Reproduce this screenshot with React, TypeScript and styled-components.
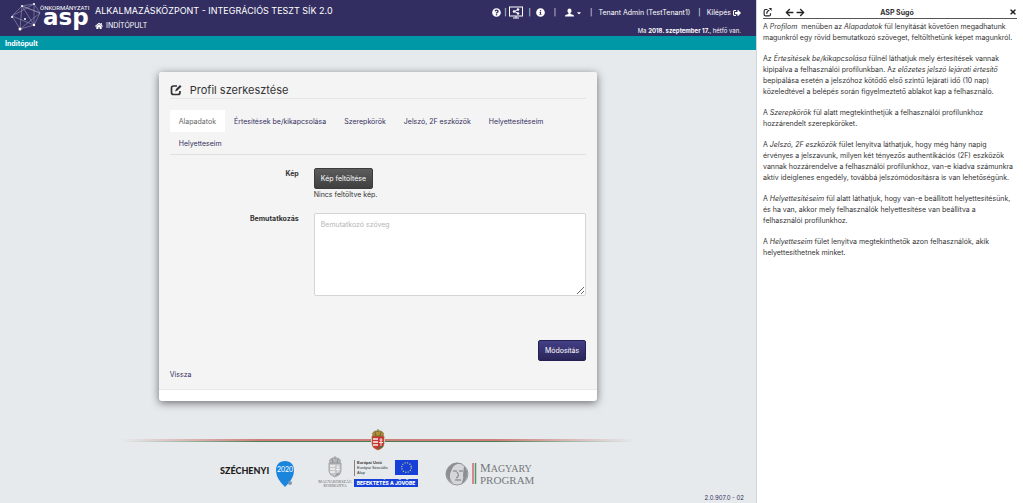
import React from 'react';
import styled, { createGlobalStyle } from 'styled-components';
import { FaHome, FaQuestionCircle, FaInfoCircle, FaSignOutAlt, FaCaretDown, FaArrowLeft, FaArrowRight, FaTimes } from 'react-icons/fa';

const Global = createGlobalStyle`
  * { box-sizing: border-box; }
  body { margin: 0; background: #e6eaed; font: 7px/11px Inter, Roboto, sans-serif; color: #333; }
  a { color: #35305f; text-decoration: none; }
  p { margin: 0; }
  svg { display: block; flex: none; }
`;

const Page = styled.div`
  display: grid;
  grid-template-columns: minmax(0, 1fr) 267px;
  min-height: 100vh;
`;
const Main = styled.div`
  display: flex;
  flex-direction: column;
`;
const Header = styled.header`
  display: flex;
  justify-content: space-between;
  height: 36px;
  padding: 0 15px 0 10px;
  background: #332e61;
  color: #fff;
`;
const Brand = styled.div`
  display: flex;
  gap: 5px;
`;
const BrandText = styled.div`
  padding-top: 4px;
`;
const AppName = styled.div`
  font-size: 9px;
  line-height: 14px;
`;
const HomeLink = styled.a`
  display: flex;
  align-items: center;
  gap: 3px;
  margin-top: 2px;
  && { color: #fff; }
`;
const Tools = styled.div`
  display: flex;
  flex-direction: column;
  align-items: flex-end;
  padding-top: 6px;
`;
const ToolRow = styled.nav`
  display: flex;
  align-items: center;
  height: 14px;
`;
const ToolLink = styled.a`
  display: flex;
  align-items: center;
  gap: 2px;
  && { color: #fff; }
`;
const Divider = styled.span<{ $l: number; $r: number }>`
  margin: 0 ${p => p.$r}px 0 ${p => p.$l}px;
`;
const Today = styled.div`
  margin-top: 6px;
  font-size: 6px;
`;
const Crumb = styled.div`
  height: 14px;
  padding: 2px 5px;
  background: #0097a7;
  color: #fff;
  font-weight: 700;
`;
const Card = styled.main`
  width: 58%;
  margin: 22px auto 0;
  padding-bottom: 11px;
  border-radius: 3px;
  background: #fff;
  box-shadow: 0 2px 8px #0008;
`;
const CardBody = styled.div`
  padding: 11px 11px 9px;
  border-bottom: 1px solid #e8e8e8;
  border-radius: 3px 3px 0 0;
  background: #f4f4f4;
`;
const Title = styled.h1`
  display: flex;
  align-items: center;
  gap: 8px;
  margin: 0;
  padding-bottom: 1px;
  border-bottom: 1px solid #e6e6e6;
  font: 400 11px/14px Inter, Roboto, sans-serif;
`;
const Tabs = styled.nav`
  display: flex;
  flex-wrap: wrap;
  margin-top: 11px;
  border-bottom: 1px solid #e0e0e0;
`;
const Tab = styled.a<{ $active?: boolean }>`
  padding: 6px 9px 5px;
  background: ${p => (p.$active ? '#fff' : 'transparent')};
  && { color: ${p => (p.$active ? '#666' : '#35305f')}; }
`;
const Field = styled.div`
  display: grid;
  grid-template-columns: 129px minmax(0, 1fr);
  column-gap: 15px;
  margin-top: 13px;
`;
const Label = styled.label`
  font-weight: 700;
  text-align: right;
`;
const Button = styled.button<{ $primary?: boolean }>`
  height: 21px;
  padding: 0 6px;
  border: 1px solid ${p => (p.$primary ? '#242052' : '#3c3c3c')};
  border-radius: 2px;
  background: ${p => (p.$primary ? 'linear-gradient(#443f86, #2a2558)' : 'linear-gradient(#5c5c5c, #404040)')};
  color: #fff;
  font: inherit;
`;
const TextArea = styled.textarea`
  display: block;
  width: 100%;
  height: 83px;
  padding: 5px 6px;
  border: 1px solid #d5d5d5;
  border-radius: 2px;
  background: #fff;
  font: inherit;
  &::placeholder { color: #b5b5b5; }
`;
const Actions = styled.div`
  display: flex;
  justify-content: flex-end;
  margin: 44px 0 8px;
`;
const Footer = styled.footer`
  display: flex;
  flex-direction: column;
  align-items: center;
  flex: 1;
  margin-top: 28px;
`;
const Ribbon = styled.div`
  display: grid;
  grid-template-columns: 1fr 14px 1fr;
  align-items: center;
  width: 68%;
`;
const Stripe = styled.div<{ $dir: string }>`
  height: 3px;
  border-bottom: 1px solid #4c7d4c;
  background: #cd7f7c;
  mask-image: linear-gradient(to ${p => p.$dir}, #000 45%, transparent);
`;
const Logos = styled.div`
  display: flex;
  align-items: center;
  gap: 22px;
  margin-top: 5px;
`;
const Version = styled.div`
  align-self: flex-end;
  margin: auto 12px 0 0;
  color: #35305f;
  font-size: 6px;
`;
const Help = styled.aside`
  padding: 6px 6px 0 6px;
  border-left: 1px solid #cfd4d8;
  background: #fff;
`;
const HelpBar = styled.div`
  display: flex;
  align-items: center;
  justify-content: space-between;
  height: 13px;
  margin-bottom: 2px;
  border-bottom: 1px solid #555;
`;
const HelpTools = styled.div`
  display: flex;
  width: 42px;
  justify-content: space-between;
`;
const HelpEnd = styled.div`
  display: flex;
  width: 28px;
  justify-content: flex-end;
`;
const Arrows = styled.div`
  display: flex;
  gap: 2px;
`;
const IconButton = styled.button`
  padding: 0;
  border: 0;
  background: none;
  color: #222;
`;
const HelpText = styled.div`
  display: grid;
  gap: 10px;
`;

const EditIcon = ({ size }: { size: number }) => (
  <svg width={size} height={size} viewBox="0 0 24 24" fill="none" stroke="currentColor" strokeWidth="3.4">
    <path d="M14 4H7Q3 4 3 8v9q0 4 4 4h9q4 0 4-4v-3" />
    <path d="m10 15 2-5 8-8 3 3-8 8z" fill="currentColor" stroke="none" />
  </svg>
);
const ShareIcon = () => (
  <svg width="9" height="9" viewBox="0 0 24 24" fill="none" stroke="currentColor" strokeWidth="3">
    <path d="M12 4H7Q3 4 3 8v9q0 4 4 4h9q4 0 4-4v-3" />
    <path d="M10 15q0-7 7-9" />
    <path d="M15 0h8v8z" fill="currentColor" stroke="none" />
  </svg>
);
const ScreenIcon = () => (
  <svg width="14" height="13" viewBox="0 0 28 26" fill="none" stroke="currentColor" strokeWidth="2">
    <rect x="1" y="2" width="26" height="18" />
    <path d="M8 24h12M14 20v4M18 7l-7 4 7 4" />
    <g fill="currentColor" stroke="none"><circle cx="18" cy="7" r="2.5" /><circle cx="10" cy="11" r="2.5" /><circle cx="18" cy="15" r="2.5" /></g>
  </svg>
);
const UserIcon = () => (
  <svg width="9" height="9" viewBox="0 0 18 18" fill="currentColor">
    <path d="M9 1c3 0 4 2 4 5 0 2-1 3-2 4v2l6 2q1 1 1 3H0q0-2 1-3l6-2v-2C6 9 5 8 5 6c0-3 1-5 4-5z" />
  </svg>
);
const AspLogo = () => (
  <svg width="80" height="36" viewBox="0 0 80 36">
    <g fill="none" stroke="#a9a6c6" strokeWidth=".5">
      <path d="M2 16 12 6l12-2 6 9-6 12-14 4zM12 6l-2 23 20-16zM2 16l22 9L12 6l18 7M2 16l22-12v21" />
    </g>
    <g fill="#fff"><circle cx="2" cy="17" r="1" /><circle cx="12" cy="6" r="1" /><circle cx="24" cy="4" r="1" /><circle cx="24" cy="25" r="1.2" /><circle cx="10" cy="29" r="1.5" /><circle cx="15" cy="19" r="1" /></g>
    <text x="30" y="10" fill="#fff" fontFamily="Roboto, sans-serif" fontSize="6">ÖNKORMÁNYZATI</text>
    <text x="33" y="25" fill="#fff" fontFamily="DejaVu Sans, sans-serif" fontWeight="700" fontSize="23">asp</text>
  </svg>
);
const Crest = ({ gray }: { gray?: boolean }) => (
  <svg width="14" height="22" viewBox="0 0 14 22">
    <path d="M1 7h12v8q0 4-6 6-6-2-6-6z" fill={gray ? '#c4c6c8' : '#c33'} stroke={gray ? '#8d9092' : '#a37b36'} strokeWidth=".7" />
    <path d="M2 10h5M2 13h5M2 16h5" stroke="#f3f3f3" strokeWidth="1.3" />
    <path d="M10 9v8M8.5 11h3M8 13.500h4" stroke="#f3f3f3" strokeWidth=".9" />
    <path d="M8 18q2-2 4-1-1 2-5 3z" fill={gray ? '#999' : '#397943'} />
    <path d="M2 7 1.500 4Q4 1 7 2q3-1 5.500 2L12 7z" fill={gray ? '#b4b6b8' : '#b98b33'} stroke={gray ? '#8d9092' : '#74602f'} strokeWidth=".6" />
    <path d="M7 0v3M4 3l1 4M10 3 9 7" stroke={gray ? '#85888a' : '#396b46'} strokeWidth=".8" />
  </svg>
);
const Szechenyi = () => (
  <svg width="76" height="30" viewBox="0 0 76 30">
    <text x="0" y="16" fontFamily="Lato, sans-serif" fontWeight="900" fontSize="9" fill="#1c1c1c">SZÉCHENYI</text>
    <path d="M65 3c6 0 9 4 9 9 0 7-4 12-9 17-5-5-9-10-9-17 0-5 3-9 9-9z" fill="#1b85dc" />
    <text x="65" y="14" textAnchor="middle" fontFamily="Lato, sans-serif" fontSize="7" fill="#fff">2020</text>
    <circle cx="70" cy="25" r="2" fill="#7f9bb4" />
  </svg>
);
const EuLogo = () => (
  <svg width="101" height="34" viewBox="0 0 101 34">
    <g transform="translate(10 0)"><Crest gray /></g>
    <g fontFamily="Liberation Serif, serif" fontSize="4" fill="#666" textAnchor="middle"><text x="17" y="27">MAGYARORSZÁG</text><text x="17" y="31">KORMÁNYA</text></g>
    <path d="M36.500 4v16" stroke="#555" strokeWidth=".7" />
    <g fontFamily="Liberation Sans, sans-serif" fontSize="4" fill="#333"><text x="39" y="8" fontWeight="700">Európai Unió</text><text x="39" y="13">Európai Szociális</text><text x="39" y="18">Alap</text></g>
    <rect x="77" y="4" width="23" height="15" fill="#1740d8" />
    <circle cx="88.500" cy="11.500" r="4.800" fill="none" stroke="#d8d76c" strokeWidth="1.200" strokeDasharray="1.100 1.413" />
    <rect x="36" y="23" width="64" height="8" fill="#1740d8" />
    <text x="68" y="29" textAnchor="middle" fontFamily="Inter, sans-serif" fontWeight="800" fontSize="5" fill="#fff">BEFEKTETÉS A JÖVŐBE</text>
  </svg>
);
const Magyary = () => (
  <svg width="96" height="30" viewBox="0 0 96 30">
    <circle cx="16" cy="16" r="11" fill="#d4d6d8" stroke="#85888a" strokeWidth=".8" />
    <path d="M7 10q6-8 15-4-9-1-11 5l-2 5q-1 6 4 10-8-4-8-11zM23 8q4 4 3 10-1 5-6 8 3-5 2-9z" fill="#8c8f91" />
    <path d="M12 13h4M18 13h4M16 14q2 2 1 5l-2 1M14 22h6" fill="none" stroke="#777" />
    <path d="M32 5v21" stroke="#d2696c" strokeWidth="1.500" /><path d="M34.500 5v21" stroke="#52966d" strokeWidth="1.500" />
    <g fontFamily="Liberation Serif, serif" fill="#76797c"><text x="39" y="14" fontSize="12">M<tspan fontSize="10">AGYARY</tspan></text><text x="39" y="26" fontSize="11">PROGRAM</text></g>
  </svg>
);

export default function App() {
  return (
    <>
      <Global />
      <Page>
        <Main>
          <Header>
            <Brand>
              <AspLogo />
              <BrandText>
                <AppName>ALKALMAZÁSKÖZPONT - INTEGRÁCIÓS TESZT SÍK 2.0</AppName>
                <HomeLink href="#"><FaHome size={8} />INDÍTÓPULT</HomeLink>
              </BrandText>
            </Brand>
            <Tools>
              <ToolRow>
                <ToolLink href="#" aria-label="Súgó"><FaQuestionCircle size={9} /></ToolLink>
                <Divider $l={3} $r={3}>|</Divider>
                <ToolLink href="#" aria-label="Megosztás"><ScreenIcon /></ToolLink>
                <Divider $l={5} $r={5}>|</Divider>
                <ToolLink href="#" aria-label="Információ"><FaInfoCircle size={9} /></ToolLink>
                <Divider $l={9} $r={9}>|</Divider>
                <ToolLink href="#" aria-label="Profil"><UserIcon /><FaCaretDown size={6} /></ToolLink>
                <Divider $l={8} $r={6}>|</Divider>
                <span>Tenant Admin (TestTenant1)</span>
                <Divider $l={8} $r={6}>|</Divider>
                <ToolLink href="#">Kilépés <FaSignOutAlt size={8} /></ToolLink>
              </ToolRow>
              <Today>Ma <b>2018. szeptember 17.</b>, hétfő van.</Today>
            </Tools>
          </Header>
          <Crumb>Indítópult</Crumb>
          <Card>
            <CardBody>
              <Title><EditIcon size={12} />Profil szerkesztése</Title>
              <Tabs>
                <Tab href="#" $active>Alapadatok</Tab>
                <Tab href="#">Értesítések be/kikapcsolása</Tab>
                <Tab href="#">Szerepkörök</Tab>
                <Tab href="#">Jelszó, 2F eszközök</Tab>
                <Tab href="#">Helyettesítéseim</Tab>
                <Tab href="#">Helyetteseim</Tab>
              </Tabs>
              <Field>
                <Label htmlFor="picture">Kép</Label>
                <div>
                  <Button id="picture" type="button">Kép feltöltése</Button>
                  <p>Nincs feltöltve kép.</p>
                </div>
              </Field>
              <Field>
                <Label htmlFor="intro">Bemutatkozás</Label>
                <TextArea id="intro" placeholder="Bemutatkozó szöveg" />
              </Field>
              <Actions><Button type="submit" $primary>Módosítás</Button></Actions>
              <a href="#">Vissza</a>
            </CardBody>
          </Card>
          <Footer>
            <Ribbon><Stripe $dir="left" /><Crest /><Stripe $dir="right" /></Ribbon>
            <Logos><Szechenyi /><EuLogo /><Magyary /></Logos>
            <Version>2.0.907.0 - 02</Version>
          </Footer>
        </Main>
        <Help>
          <HelpBar>
            <HelpTools>
              <IconButton aria-label="Megnyitás"><ShareIcon /></IconButton>
              <Arrows>
                <IconButton aria-label="Vissza"><FaArrowLeft size={9} /></IconButton>
                <IconButton aria-label="Előre"><FaArrowRight size={9} /></IconButton>
              </Arrows>
            </HelpTools>
            <b>ASP Súgó</b>
            <HelpEnd><IconButton aria-label="Bezárás"><FaTimes size={8} /></IconButton></HelpEnd>
          </HelpBar>
          <HelpText>
            <p>A <i>Profilom</i>&nbsp; menüben az <i>Alapadatok</i> fül lenyitását követően megadhatunk magunkról egy rövid bemutatkozó szöveget, feltölthetünk képet magunkról.</p>
            <p>Az <i>Értesítések be/kikapcsolása</i> fülnél láthatjuk mely értesítések vannak kipipálva a felhasználói profilunkban. Az <i>előzetes jelszó lejárati értesítő</i> bepipálása esetén a jelszóhoz kötődő első szintű lejárati idő (10 nap) közeledtével a belépés során figyelmeztető ablakot kap a felhasználó.</p>
            <p>A <i>Szerepkörök</i> fül alatt megtekinthetjük a felhasználói profilunkhoz hozzárendelt szerepköröket.</p>
            <p>A <i>Jelszó, 2F eszközök</i> fület lenyitva láthatjuk, hogy még hány napig érvényes a jelszavunk, milyen két tényezős authentikációs (2F) eszközök vannak hozzárendelve a felhasználói profilunkhoz, van-e kiadva számunkra aktív ideiglenes engedély, továbbá jelszómódosításra is van lehetőségünk.</p>
            <p>A <i>Helyettesítéseim</i> fül alatt láthatjuk, hogy van-e beállított helyettesítésünk, és ha van, akkor mely felhasználók helyettesítése van beállítva a felhasználói profilunkhoz.</p>
            <p>A <i>Helyetteseim</i> fület lenyitva megtekinthetők azon felhasználók, akik helyettesíthetnek minket.</p>
          </HelpText>
        </Help>
      </Page>
    </>
  );
}
